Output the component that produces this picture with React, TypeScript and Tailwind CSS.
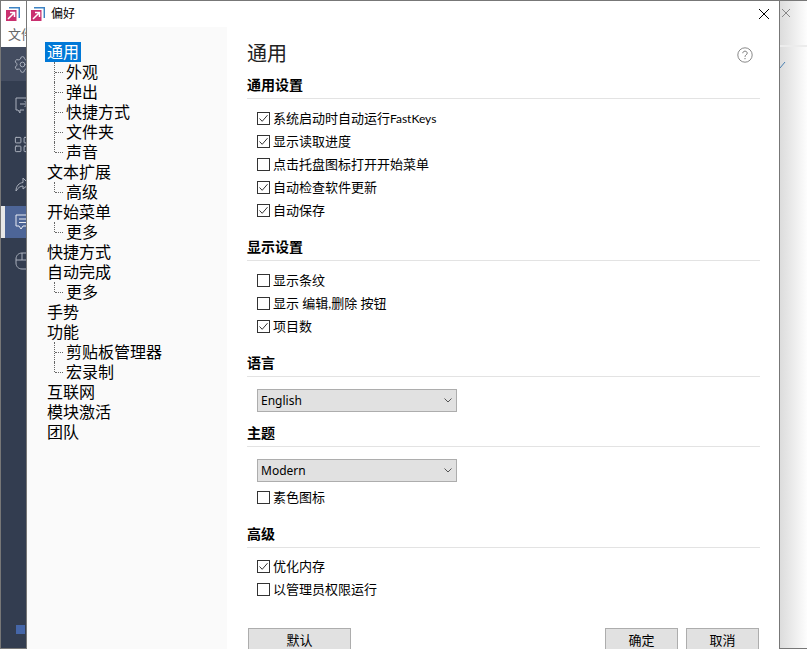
import type { ReactNode } from 'react';
import { Settings, LayoutGrid } from 'lucide-react';

const treeItems: Array<{ label: string; child?: boolean; last?: boolean; active?: boolean }> = [
  { label: '通用', active: true },
  { label: '外观', child: true },
  { label: '弹出', child: true },
  { label: '快捷方式', child: true },
  { label: '文件夹', child: true },
  { label: '声音', child: true, last: true },
  { label: '文本扩展' },
  { label: '高级', child: true, last: true },
  { label: '开始菜单' },
  { label: '更多', child: true, last: true },
  { label: '快捷方式' },
  { label: '自动完成' },
  { label: '更多', child: true, last: true },
  { label: '手势' },
  { label: '功能' },
  { label: '剪贴板管理器', child: true },
  { label: '宏录制', child: true, last: true },
  { label: '互联网' },
  { label: '模块激活' },
  { label: '团队' },
];

function Logo() {
  return (
    <svg width="14" height="14" viewBox="0 0 14 14" className="shrink-0">
      <path d="M3 0.7H13.3V11" fill="none" stroke="#3d83c4" strokeWidth="1.5" />
      <rect x="0" y="3" width="10.5" height="11" fill="#c9306f" />
      <path d="M2 12L8 6M4 5.5H8.5V10" fill="none" stroke="#fff" strokeWidth="1.5" />
    </svg>
  );
}

function Check({ label, checked = false }: { label: ReactNode; checked?: boolean }) {
  return (
    <div className="ml-[10px] flex h-[23px] items-center">
      <span className="flex h-[13px] w-[13px] shrink-0 items-center justify-center border border-[#333] bg-white">
        {checked && (
          <svg width="11" height="11" viewBox="0 0 11 11">
            <path d="M1.5 5.5L4.2 8.3L9.5 2.2" fill="none" stroke="#333" strokeWidth="1" />
          </svg>
        )}
      </span>
      <span className="ml-[3px] font-['Lato','Noto_Sans_CJK_SC',sans-serif] text-[13px] leading-none text-[#000]">{label}</span>
    </div>
  );
}

function SectionHead({ title }: { title: string }) {
  return (
    <div className="flex h-[21px] items-center border-b border-[#e3e3e3] pb-[8px] text-[14px] leading-none font-bold text-[#000]">
      {title}
    </div>
  );
}

function Select({ value }: { value: string }) {
  return (
    <div className="ml-[10px] flex h-[23px] w-[200px] items-center justify-between border border-[#adadad] bg-[#e1e1e1] pr-[4px] pl-[3px] font-['Noto_Sans',sans-serif] text-[12px] leading-none text-[#000]">
      <span>{value}</span>
      <svg width="8" height="5" viewBox="0 0 8 5">
        <path d="M0.5 0.5L4 4L7.5 0.5" fill="none" stroke="#555" strokeWidth="1" />
      </svg>
    </div>
  );
}

function Btn({ label, width }: { label: string; width: string }) {
  return (
    <div className={`flex h-[21px] items-center justify-center border border-b-0 border-[#adadad] bg-[#e1e1e1] text-[13px] leading-none text-[#000] ${width}`}>
      {label}
    </div>
  );
}

export default function App() {
  return (
    <div className="flex h-[649px] w-[807px] overflow-hidden bg-white font-['Noto_Sans_CJK_SC',sans-serif]">
      {/* main window behind the dialog */}
      <div className="flex w-[26px] shrink-0 flex-col overflow-hidden border-t border-l border-[#777]">
        <div className="flex h-[26px] items-center pl-[5px]">
          <Logo />
        </div>
        <div className="flex h-[20px] items-start overflow-hidden pl-[7px] text-[13px] leading-none whitespace-nowrap text-[#666]">文件</div>
        <div className="flex flex-1 flex-col border-b border-[#777] bg-[#333d50]">
          <div className="flex h-[34px] items-center bg-[#434c60] pl-[12px]">
            <Settings size={19} strokeWidth={1.25} className="shrink-0 text-[#aab0bc]" />
          </div>
          <div className="mt-[5px] flex h-[39px] items-center pl-[14px]">
            <svg className="shrink-0" width="14" height="20" viewBox="0 0 14 20"><path d="M12 2H1V14H3L5 17V14H9M5 8H12M9.5 5L12.5 8L9.5 11" fill="none" stroke="#aab0bc" /></svg>
          </div>
          <div className="flex h-[39px] items-center pl-[12px]">
            <LayoutGrid size={19} strokeWidth={1.25} className="shrink-0 text-[#aab0bc]" />
          </div>
          <div className="flex h-[39px] items-center pl-[14px]">
            <svg className="shrink-0" width="14" height="16" viewBox="0 0 14 16"><path d="M1 15C1 10 4 7 8 6.5V2L14 8L8 13V10C5 10 3 12 1 15Z" fill="none" stroke="#aab0bc" /></svg>
          </div>
          <div className="mt-[3px] flex h-[32px] items-center bg-[#4d6597]">
            <div className="h-full w-[4px] shrink-0 bg-[#e8e8e8]" />
            <svg className="ml-[10px] shrink-0" width="14" height="18" viewBox="0 0 14 18"><path d="M12 2H1V13H4L6 16L8 13H12M4 6H12M4 9.5H12" fill="none" stroke="#e8ebf2" /></svg>
          </div>
          <div className="mt-[3px] flex h-[39px] items-center pl-[14px]">
            <svg className="shrink-0" width="12" height="18" viewBox="0 0 12 18"><path d="M12 1H7C3.5 1 1 3.5 1 7V11C1 14.5 3.5 17 7 17H12M1 8H12M7 1V8" fill="none" stroke="#aab0bc" /></svg>
          </div>
          <div className="flex-1" />
          <div className="mb-[14px] ml-[15px] h-[9px] w-[9px] bg-[#4566a8]" />
        </div>
      </div>

      {/* dialog */}
      <div className="flex w-[754px] shrink-0 flex-col border-x border-t border-[#777] bg-white">
        <div className="flex h-[26px] shrink-0 items-center pl-[4px]">
          <Logo />
          <span className="ml-[6px] pb-[2px] text-[12px] leading-none text-[#000]">偏好</span>
          <svg className="mr-[9px] ml-auto" width="12" height="12" viewBox="0 0 12 12">
            <path d="M1 1L11 11M11 1L1 11" stroke="#000" strokeWidth="1" />
          </svg>
        </div>
        <div className="flex min-h-0 flex-1">
          <div className="w-[200px] shrink-0 bg-[#fafafa] pt-[15px] pl-[18px]">
            {treeItems.map((item, i) => (
              <div key={i} className="relative flex h-[20px] items-start text-[16px] leading-[18px] text-[#000]">
                {item.child ? (
                  <>
                    <span className={`absolute top-0 left-[9px] w-0 border-l border-dotted border-[#666] ${item.last ? 'h-[10px]' : 'h-[20px]'}`} />
                    <span className="absolute top-[10px] left-[10px] w-[8px] border-t border-dotted border-[#666]" />
                    <span className="ml-[21px]">{item.label}</span>
                  </>
                ) : item.active ? (
                  <span className="h-[20px] bg-[#0078d7] px-[2px] text-white">{item.label}</span>
                ) : (
                  <span className="ml-[2px]">{item.label}</span>
                )}
              </div>
            ))}
          </div>

          <div className="flex min-w-0 flex-1 flex-col pr-[19px] pl-[20px]">
            <div className="flex h-[51px] shrink-0 items-center justify-between pt-[1px] pr-[7px]">
              <span className="text-[20px] leading-none text-[#222]">通用</span>
              <svg className="mt-[4px]" width="16" height="16" viewBox="0 0 16 16">
                <circle cx="8" cy="8" r="7.2" fill="none" stroke="#8a8a8a" />
                <path d="M5.8 6.2C5.8 3.5 10.2 3.5 10.2 6.2C10.2 7.8 8 7.8 8 9.8" fill="none" stroke="#777" />
                <rect x="7.5" y="11" width="1" height="1.2" fill="#777" />
              </svg>
            </div>
            <SectionHead title="通用设置" />
            <div className="mt-[8px]">
              <Check label={<>系统启动时自动运行<span className="text-[12px]">FastKeys</span></>} checked />
              <Check label="显示读取进度" checked />
              <Check label="点击托盘图标打开开始菜单" />
              <Check label="自动检查软件更新" checked />
              <Check label="自动保存" checked />
            </div>
            <div className="mt-[18px]">
              <SectionHead title="显示设置" />
            </div>
            <div className="mt-[8px]">
              <Check label="显示条纹" />
              <Check label="显示 编辑,删除 按钮" />
              <Check label="项目数" checked />
            </div>
            <div className="mt-[18px]">
              <SectionHead title="语言" />
            </div>
            <div className="mt-[12px]">
              <Select value="English" />
            </div>
            <div className="mt-[14px]">
              <SectionHead title="主题" />
            </div>
            <div className="mt-[12px]">
              <Select value="Modern" />
            </div>
            <div className="mt-[4px]">
              <Check label="素色图标" />
            </div>
            <div className="mt-[18px]">
              <SectionHead title="高级" />
            </div>
            <div className="mt-[7px]">
              <Check label="优化内存" checked />
              <Check label="以管理员权限运行" />
            </div>
            <div className="mt-auto flex pr-[1px] pl-[1px]">
              <Btn label="默认" width="w-[103px]" />
              <div className="ml-auto flex gap-[8px]">
                <Btn label="确定" width="w-[73px]" />
                <Btn label="取消" width="w-[73px]" />
              </div>
            </div>
          </div>
        </div>
      </div>

      {/* right edge of main window */}
      <div className="flex flex-1 flex-col border-t border-b border-[#777] bg-gradient-to-r from-[#dcdcdc] to-[#fdfdfd]">
        <svg className="mt-[7px] ml-[1px]" width="10" height="10" viewBox="0 0 10 10">
          <path d="M1 1L9 9M9 1L1 9" stroke="#888" />
        </svg>
        <div className="mt-[27px] h-[2px] bg-[#ececec]" />
        <svg className="mt-[14px]" width="6" height="7" viewBox="0 0 6 7">
          <path d="M0 7L5 1" stroke="#4a7fb0" />
        </svg>
      </div>
    </div>
  );
}
